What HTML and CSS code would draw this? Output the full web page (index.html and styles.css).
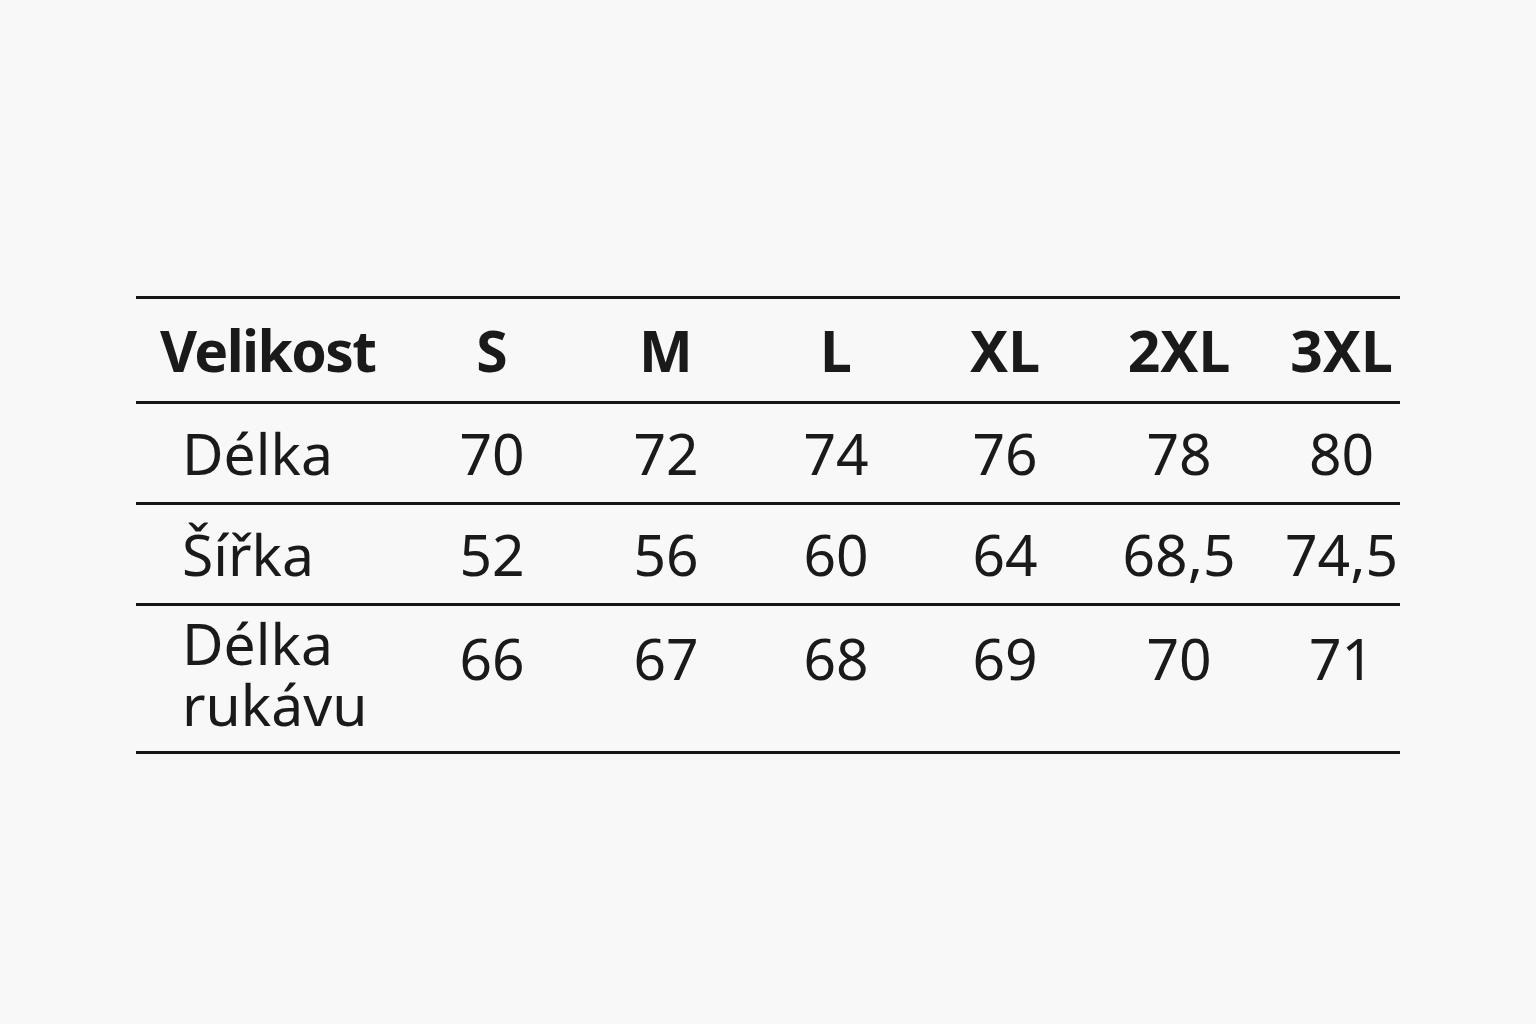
FILE: index.html
```html
<!DOCTYPE html>
<html lang="cs">
<head>
<meta charset="utf-8">
<link rel="stylesheet" href="styles.css">
</head>
<body>
<main class="page">
  <div class="table">
    <div class="row head">
      <div class="label title">Velikost</div>
      <div class="cell">S</div>
      <div class="cell">M</div>
      <div class="cell">L</div>
      <div class="cell">XL</div>
      <div class="cell">2XL</div>
      <div class="cell last">3XL</div>
    </div>
    <div class="row">
      <div class="label sub">Délka</div>
      <div class="cell">70</div>
      <div class="cell">72</div>
      <div class="cell">74</div>
      <div class="cell">76</div>
      <div class="cell">78</div>
      <div class="cell last">80</div>
    </div>
    <div class="row">
      <div class="label sub">Šířka</div>
      <div class="cell">52</div>
      <div class="cell">56</div>
      <div class="cell">60</div>
      <div class="cell">64</div>
      <div class="cell">68,5</div>
      <div class="cell last">74,5</div>
    </div>
    <div class="row tall">
      <div class="label sub"><span class="line">Délka</span><span class="line">rukávu</span></div>
      <div class="cell">66</div>
      <div class="cell">67</div>
      <div class="cell">68</div>
      <div class="cell">69</div>
      <div class="cell">70</div>
      <div class="cell last">71</div>
    </div>
  </div>
</main>
</body>
</html>
```
FILE: styles.css
```css
html, body {
  margin: 0;
  padding: 0;
  background: #f8f8f8;
}
body {
  font-family: "Noto Sans", "Open Sans", sans-serif;
  color: #1a1a1a;
}
.page {
  width: 1536px;
  height: 1024px;
  padding-top: 296px;
  box-sizing: border-box;
}
.table {
  margin-left: 136px;
  width: 1264px;
  border-top: 3px solid #151515;
}
.row {
  display: grid;
  grid-template-columns: 271px 170px 178px 162px 176px 172px 135px;
  align-items: center;
  height: 98px;
  border-bottom: 3px solid #151515;
  font-size: 57px;
  line-height: 1;
}
.head {
  height: 102px;
  font-weight: 700;
}
.label {
  padding-left: 24px;
}
.title {
  letter-spacing: -1.6px;
}
.sub {
  padding-left: 46px;
}
.cell {
  text-align: center;
}
.cell.last {
  padding-left: 18px;
}
.tall {
  height: 145px;
  align-items: start;
}
.tall .label {
  padding-top: 9px;
}
.line {
  display: block;
  line-height: 1;
  height: 61px;
}
.tall .cell {
  padding-top: 24px;
}
```
